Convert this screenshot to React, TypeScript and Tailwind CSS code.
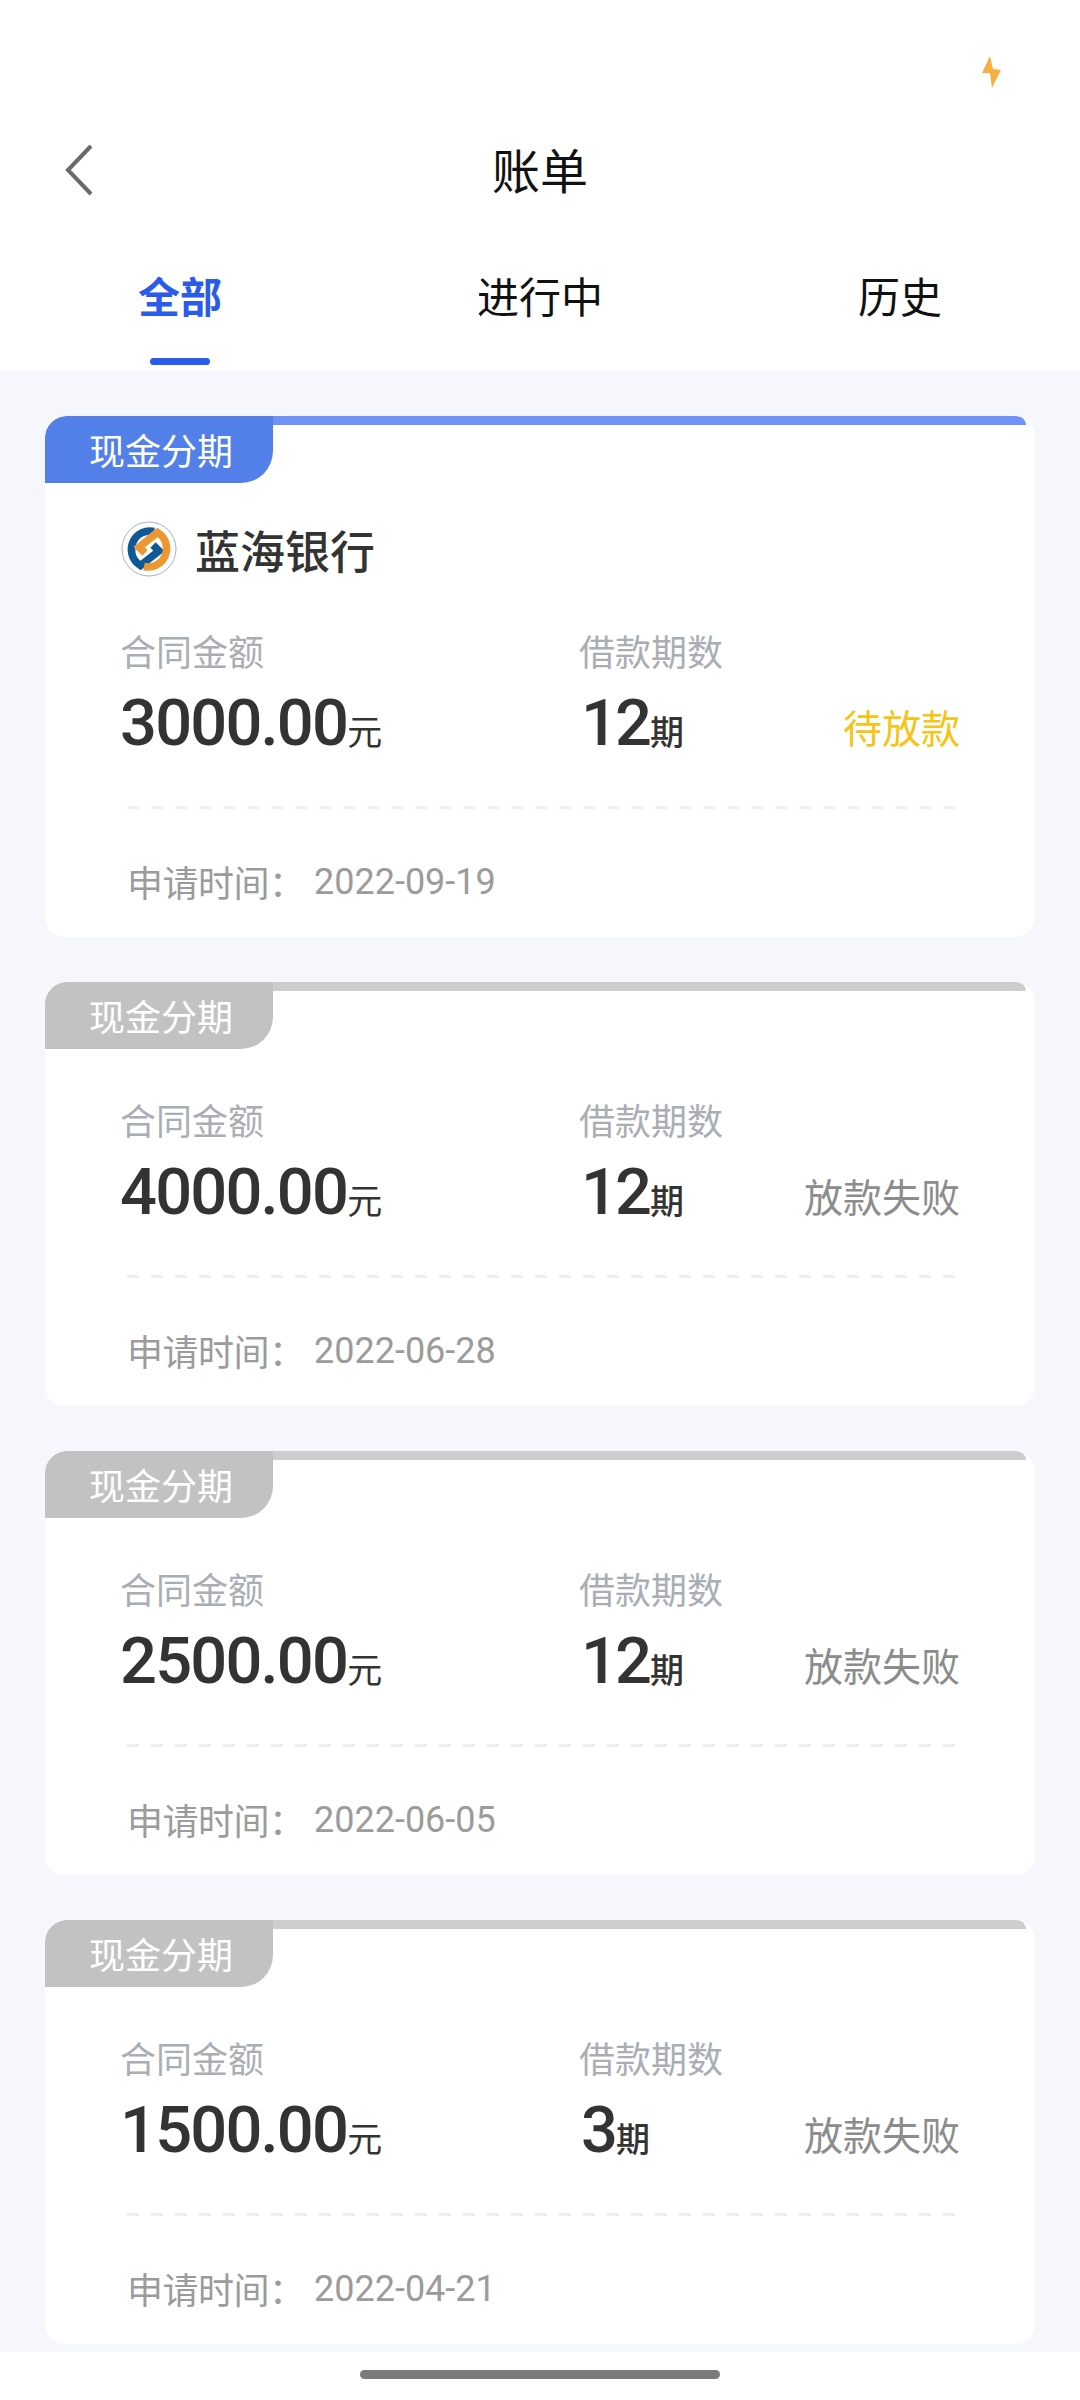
const cjk = "font-['Noto_Sans_CJK_SC',sans-serif]";

type Card = { amount: string; term: string; status: string; date: string; active?: boolean };

const cards: Card[] = [
  { amount: "3000.00", term: "12", status: "待放款", date: "2022-09-19", active: true },
  { amount: "4000.00", term: "12", status: "放款失败", date: "2022-06-28" },
  { amount: "2500.00", term: "12", status: "放款失败", date: "2022-06-05" },
  { amount: "1500.00", term: "3", status: "放款失败", date: "2022-04-21" },
];

function BankLogo() {
  return (
    <svg width="56" height="56" viewBox="0 0 56 56" fill="none">
      <circle cx="28" cy="28" r="27" stroke="#9fb0e6" strokeWidth="1" fill="#fff" />
      <path d="M33 10.5A18.5 18.5 0 0 0 18 43.5L19.5 44.5L38 30L32 24" stroke="#0f5a96" strokeWidth="7.5" />
      <path d="M33 10.5A18.5 18.5 0 0 0 18 43.5L19.5 44.5L38 30L32 24" stroke="#ee9633" strokeWidth="7.5" transform="rotate(180 28 28)" />
    </svg>
  );
}

function BillCard({ amount, term, status, date, active }: Card) {
  return (
    <div className="bg-white rounded-[20px] overflow-hidden">
      <div className="flex h-[67px] items-start">
        <div
          className={`w-[228px] h-[67px] rounded-tl-[22px] rounded-br-[32px] flex items-center pl-[44px] pb-[2px] text-[36px] leading-none text-white ${active ? "bg-[#527fe8]" : "bg-[#c2c2c2]"}`}
        >
          现金分期
        </div>
        <div className={`flex-1 h-[9px] mr-[9px] rounded-tr-[14px] ${active ? "bg-[#7092f6]" : "bg-[#cdcdcd]"}`} />
      </div>

      {active ? (
        <div className="flex items-center h-[56px] mt-[38px] mb-[50px] pl-[76px]">
          <BankLogo />
          <span className="ml-[18px] text-[45px] font-medium leading-none text-[#333333]">蓝海银行</span>
        </div>
      ) : (
        <div className="h-[47px]" />
      )}

      <div className="flex h-[50px] items-center pl-[75px] pb-[5px] text-[36px] leading-none text-[#a9aeb4]">
        <span className="w-[459px]">合同金额</span>
        <span>借款期数</span>
      </div>

      <div className="flex h-[94px] items-center pl-[75px] pr-[75px] pb-[2px]">
        <div className="w-[459px] flex items-baseline text-[#333333]">
          <span className="font-['Roboto',sans-serif] font-medium text-[65px] leading-none tracking-[-1.8px]">{amount}</span>
          <span className="text-[35px] leading-none">元</span>
        </div>
        <div className="flex items-baseline text-[#333333]">
          <span className="font-['Roboto',sans-serif] font-medium text-[65px] leading-none tracking-[-3px] ml-[2px]">{term}</span>
          <span className="text-[34px] font-medium leading-none ml-[1px]">期</span>
        </div>
        <span className={`ml-auto text-[39px] leading-none pt-[7px] ${active ? "text-[#f6c414]" : "text-[#8c8c8c]"}`}>{status}</span>
      </div>

      <div className="ml-[82px] mr-[78px] mt-[35px] h-[3px] bg-[repeating-linear-gradient(90deg,#efefef_0_12px,transparent_12px_24px)]" />

      <div className="flex h-[50px] mt-[48px] mb-[30px] items-center pl-[82px] text-[36px] leading-none text-[#9b9b9b]">
        <span className="w-[187px] tracking-[-0.5px] pb-[2px] whitespace-nowrap">申请时间：</span>
        <span className="font-['Roboto',sans-serif]">{date}</span>
      </div>
    </div>
  );
}

export default function App() {
  return (
    <div className={`w-[1080px] h-[2400px] bg-white flex flex-col overflow-hidden ${cjk}`}>
      <div className="h-[130px] flex justify-end items-start pt-[56px] pr-[78px]">
        <svg width="20" height="32" viewBox="0 0 20 32">
          <polygon points="8,0 0,17 8,17 10,32 19,14 11,13" fill="#f5b041" />
        </svg>
      </div>

      <div className="h-[80px] grid grid-cols-[1fr_auto_1fr] items-center">
        <div className="pl-[63px]">
          <svg width="32" height="54" viewBox="0 0 32 54" fill="none">
            <path d="M28 3L5 27L28 51" stroke="#6a6a6a" strokeWidth="4" />
          </svg>
        </div>
        <div className="text-[48px] leading-none pb-[5px] text-[#111111]">账单</div>
        <div />
      </div>

      <div className="grid grid-cols-3 pt-[62px] pb-[6px]">
        <div className="flex flex-col items-center">
          <span className="h-[50px] flex items-center pb-[5px] text-[42px] font-semibold leading-none text-[#2a5bea]">全部</span>
          <span className="mt-[36px] w-[60px] h-[7px] rounded-full bg-[#2a5bea]" />
        </div>
        <div className="flex flex-col items-center">
          <span className="h-[50px] flex items-center pb-[5px] text-[42px] leading-none text-[#111111]">进行中</span>
        </div>
        <div className="flex flex-col items-center">
          <span className="h-[50px] flex items-center pb-[5px] text-[42px] leading-none text-[#111111]">历史</span>
        </div>
      </div>

      <div className="flex-1 bg-[#f6f7fc] px-[45px] pt-[45px] flex flex-col gap-[45px]">
        {cards.map((c) => (
          <BillCard key={c.amount} {...c} />
        ))}
      </div>

      <div className="h-[48px] pt-[18px] flex justify-center">
        <div className="w-[360px] h-[9px] rounded-full bg-[#7a7a7a]" />
      </div>
    </div>
  );
}
